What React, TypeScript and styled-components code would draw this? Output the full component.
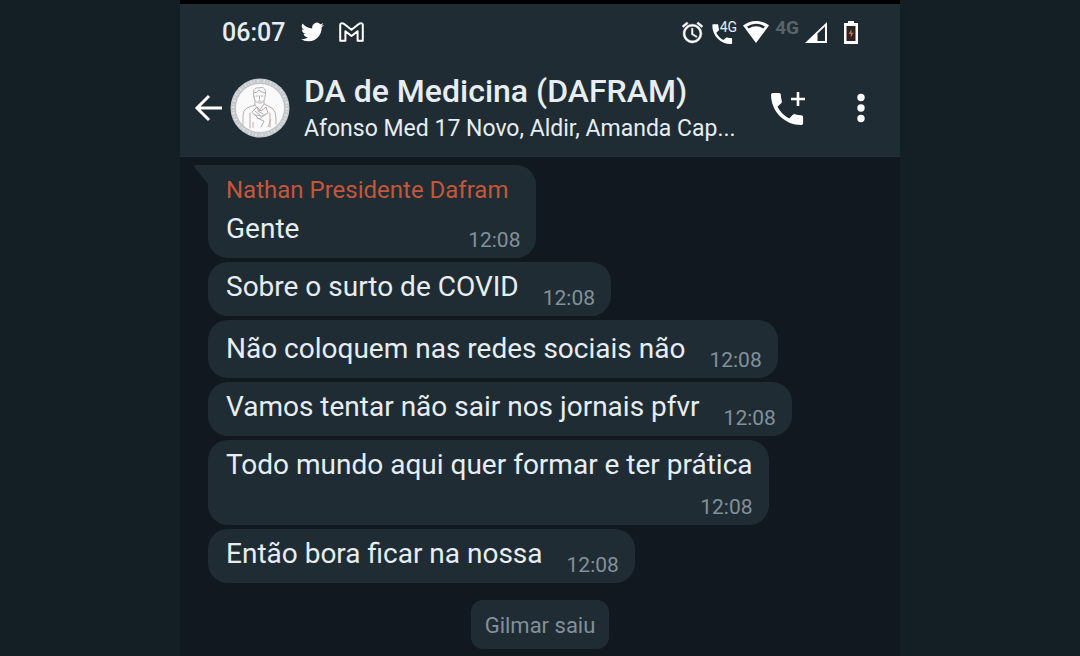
import React from "react";
import styled, { createGlobalStyle } from "styled-components";

const GlobalStyle = createGlobalStyle`
  *, *::before, *::after { box-sizing: border-box; }
  body {
    margin: 0;
    background: #131e25;
    color: #e6edf3;
    font-family: Roboto, "Liberation Sans", sans-serif;
  }
`;

const Phone = styled.div`
  width: 100%;
  max-width: 720px;
  min-height: 100vh;
  margin: 0 auto;
  display: flex;
  flex-direction: column;
  background: #111820;
  border-top: 4px solid #000;
`;

const TopBar = styled.header`
  background: #202c33;
  border-bottom: 1px solid #25303a;
`;

const StatusBar = styled.div`
  display: flex;
  align-items: center;
  height: 56px;
  padding: 0 42px;
`;

const Clock = styled.time`
  font-size: 25px;
  line-height: 32px;
  font-weight: 500;
  padding-top: 2px;
  margin-right: 16px;
`;

const StatusGroup = styled.div<{ $gap: number; $end?: boolean }>`
  display: flex;
  align-items: center;
  gap: ${(p) => p.$gap}px;
  margin-left: ${(p) => (p.$end ? "auto" : "0")};

  svg { display: block; }
`;

const CallStatus = styled.span`
  position: relative;
  display: block;
  width: 26px;
`;

const CallBadge = styled.span`
  position: absolute;
  top: 1px;
  right: 0;
  background: #202c33;
  font-size: 14px;
  line-height: 14px;
  height: 12px;
`;

const NetworkLabel = styled.span`
  color: #59636a;
  font-size: 19px;
  line-height: 20px;
  font-weight: 700;
  padding-bottom: 8px;
`;

const Battery = styled.div`
  margin-left: 17px;

  svg { display: block; }
`;

const Toolbar = styled.div`
  display: flex;
  align-items: center;
  height: 96px;
  padding: 0 20px 0 12px;
`;

const IconButton = styled.button<{ $width: number }>`
  display: flex;
  align-items: center;
  justify-content: center;
  flex: none;
  width: ${(p) => p.$width}px;
  height: 48px;
  padding: 0;
  border: 0;
  background: none;
  color: #fff;
  cursor: pointer;
`;

const Avatar = styled.svg`
  flex: none;
  width: 60px;
  height: 60px;
  margin-left: 6px;
`;

const GroupInfo = styled.div`
  flex: 1;
  min-width: 0;
  margin-left: 14px;
`;

const GroupName = styled.h1`
  margin: 0 0 2px;
  font-size: 32px;
  line-height: 40px;
  font-weight: 500;
  white-space: nowrap;
`;

const Members = styled.p`
  margin: 0;
  font-size: 23px;
  line-height: 32px;
  white-space: nowrap;
`;

const Actions = styled.div`
  display: flex;
  align-items: center;
  gap: 35px;
`;

const Chat = styled.main`
  flex: 1;
  display: flex;
  flex-direction: column;
  padding: 8px 28px;
`;

const Messages = styled.ol`
  display: flex;
  flex-direction: column;
  align-items: flex-start;
  gap: 4px;
  margin: 0;
  padding: 0;
  list-style: none;
`;

const Bubble = styled.li<{ $tail?: boolean; $roomy?: boolean }>`
  position: relative;
  max-width: 100%;
  padding: ${(p) => (p.$roomy ? 11 : 7)}px 16px 6px 18px;
  border-radius: ${(p) => (p.$tail ? "0 20px 20px 20px" : "20px")};
  background: #202c33;
`;

const Tail = styled.svg`
  position: absolute;
  top: 0;
  left: -14px;
`;

const Sender = styled.div`
  margin-bottom: 3px;
  padding-right: 12px;
  color: #c4573a;
  font-size: 24px;
  line-height: 36px;
`;

const Body = styled.div<{ $stacked?: boolean }>`
  display: flex;
  flex-direction: ${(p) => (p.$stacked ? "column" : "row")};
  align-items: flex-end;
  justify-content: space-between;
  column-gap: 24px;
  row-gap: 7px;
`;

const Message = styled.p`
  margin: 0 0 5px;
  font-size: 28px;
  line-height: 36px;
`;

const Sent = styled.time`
  color: #82909a;
  font-size: 21px;
  line-height: 24px;
`;

const Notice = styled.p`
  align-self: center;
  margin: 17px 0 0;
  padding: 10px 14px 7px;
  border-radius: 12px;
  background: #202c33;
  color: #82909a;
  font-size: 22px;
  line-height: 32px;
`;

type Item = {
  text: string;
  time: string;
  sender?: string;
  stacked?: boolean;
  roomy?: boolean;
};

const items: Item[] = [
  { sender: "Nathan Presidente Dafram", text: "Gente", time: "12:08" },
  { text: "Sobre o surto de COVID", time: "12:08" },
  { text: "Não coloquem nas redes sociais não", time: "12:08", roomy: true },
  { text: "Vamos tentar não sair nos jornais pfvr", time: "12:08" },
  { text: "Todo mundo aqui quer formar e ter prática", time: "12:08", stacked: true },
  { text: "Então bora ficar na nossa", time: "12:08" },
];

const PHONE =
  "M6.62 10.79c1.44 2.83 3.76 5.14 6.59 6.59l2.2-2.2c.27-.27.67-.36 1.02-.24 1.12.37 2.33.57 3.57.57.55 0 1 .45 1 1V20c0 .55-.45 1-1 1-9.39 0-17-7.61-17-17 0-.55.45-1 1-1h3.5c.55 0 1 .45 1 1 0 1.25.2 2.45.57 3.57.11.35.03.74-.25 1.02l-2.2 2.2z";

const TwitterIcon = () => (
  <svg width="23" height="24" viewBox="0 0 24 24" fill="#fff" aria-hidden="true">
    <path d="M23.95 4.57a10 10 0 0 1-2.82.77 4.96 4.96 0 0 0 2.16-2.72c-.95.55-2 .95-3.13 1.18a4.92 4.92 0 0 0-8.38 4.48C7.69 8.1 4.07 6.13 1.64 3.16a4.92 4.92 0 0 0 1.52 6.57 4.9 4.9 0 0 1-2.23-.61v.06a4.92 4.92 0 0 0 3.95 4.83 5 5 0 0 1-2.21.08 4.94 4.94 0 0 0 4.6 3.42A9.87 9.87 0 0 1 0 19.54a13.99 13.99 0 0 0 7.55 2.21c9.05 0 14-7.5 14-13.98 0-.21 0-.42-.02-.63a9.94 9.94 0 0 0 2.42-2.57z" />
  </svg>
);

const GmailIcon = () => (
  <svg width="25" height="20" viewBox="0 0 25 20" fill="none" stroke="#fff" strokeWidth="2" strokeLinejoin="round" aria-hidden="true">
    <path d="M1.2 3.2Q1.2 1 3.3 1.2Q4.3 1.2 5.2 2L12.5 7.8L19.8 2Q20.7 1.2 21.7 1.2Q23.8 1 23.8 3.2V18.8H18.6V9.2L12.5 14L6.4 9.2V18.8H1.2Z" />
  </svg>
);

const AlarmIcon = () => (
  <svg width="25" height="25" viewBox="0 0 24 24" fill="#fff" aria-hidden="true">
    <path d="M22 5.72l-4.6-3.86-1.29 1.53 4.6 3.86L22 5.72zM7.88 3.39L6.6 1.86 2 5.71l1.29 1.53 4.59-3.85zM12.5 8H11v6l4.75 2.85.75-1.23-4-2.37V8zM12 4c-4.97 0-9 4.03-9 9s4.02 9 9 9a9 9 0 0 0 0-18zm0 16c-3.87 0-7-3.13-7-7s3.13-7 7-7 7 3.13 7 7-3.13 7-7 7z" stroke="#fff" strokeWidth=".4" />
  </svg>
);

const WifiIcon = () => (
  <svg width="26" height="22" viewBox="0 0 26 22" aria-hidden="true">
    <path d="M13 0C8 0 3.600 1.700 0 4.600L13 22L26 4.600C22.400 1.700 18 0 13 0Z" fill="#fff" />
    <path d="M4 5.400Q13 .2 22 5.400L20.300 7.600Q13 3 5.700 7.600Z" fill="#202c33" />
  </svg>
);

const SignalIcon = () => (
  <svg width="22" height="21" viewBox="0 0 22 21" aria-hidden="true">
    <path d="M0 21L22 0V21Z" fill="#fff" />
    <path d="M12.500 11.500L20 4.500V19H12.500Z" fill="#202c33" />
  </svg>
);

const BatteryIcon = () => (
  <svg width="14" height="23" viewBox="0 0 14 23" aria-hidden="true">
    <path d="M4 0H10V2H14V23H0V2H4Z" fill="#fff" />
    <path d="M2.500 5H11.500V20H2.500Z" fill="#30221f" />
    <path d="M7.500 8L4.500 13H6.700V16.500L9.600 11.800H7.500Z" fill="#b8704f" />
  </svg>
);

const GroupAvatar = () => (
  <Avatar viewBox="0 0 60 60" role="img" aria-label="DAFRAM">
    <circle cx="30" cy="30" r="29.500" fill="#c3c7ca" />
    <circle cx="30" cy="30" r="27" fill="none" stroke="#dcdfe1" strokeWidth="3" strokeDasharray="2 1.500 1 2" />
    <circle cx="30" cy="30" r="24.500" fill="#fbfafa" stroke="#b5b9bc" strokeWidth=".7" />
    <g fill="none" stroke="#b3afb0" strokeWidth="1" strokeLinecap="round" strokeLinejoin="round">
      <path d="M24 19C22 12 25 9 29 10C34 8 37 12 35 18C35 22 33 25 30 25C26 25 24 22 24 19Z" />
      <path d="M24 15Q27 15 29 12Q32 15 35 15M26 18H28M31 18H33M29.500 18V21M28 23H31" />
      <path d="M25 23V27L17 30Q13 32 13 39V47M34 23V26L42 30Q46 33 46 40V46M20 35V50M40 35V49" />
      <path d="M25 27L29 33L34 26M22 34L27 29L31 33L36 29L38 35L32 38L25 37Z" />
      <path d="M24 36L29 41L35 37M28 33L33 36M27 40L34 43L31 49M25 33L30 37" />
    </g>
    <path d="M23 44V50M41 41L38 49" stroke="#d4aaa4" strokeWidth="1" />
  </Avatar>
);

export default function App() {
  return (
    <>
      <GlobalStyle />
      <Phone>
        <TopBar>
          <StatusBar>
            <Clock>06:07</Clock>
            <StatusGroup $gap={15}>
              <TwitterIcon />
              <GmailIcon />
            </StatusGroup>
            <StatusGroup $gap={6} $end>
              <AlarmIcon />
              <CallStatus>
                <svg width="26" height="26" viewBox="0 0 26 26" fill="#fff" aria-hidden="true">
                  <path d={PHONE} transform="translate(-2 2) scale(1.1)" />
                </svg>
                <CallBadge>4G</CallBadge>
              </CallStatus>
              <WifiIcon />
              <NetworkLabel>4G</NetworkLabel>
              <SignalIcon />
            </StatusGroup>
            <Battery>
              <BatteryIcon />
            </Battery>
          </StatusBar>
          <Toolbar>
            <IconButton $width={32} type="button" aria-label="Voltar">
              <svg width="30" height="28" viewBox="0 0 30 28" fill="none" stroke="currentColor" strokeWidth="3" aria-hidden="true">
                <path d="M29 14H4M16 2L4 14L16 26" />
              </svg>
            </IconButton>
            <GroupAvatar />
            <GroupInfo>
              <GroupName>DA de Medicina (DAFRAM)</GroupName>
              <Members>Afonso Med 17 Novo, Aldir, Amanda Cap...</Members>
            </GroupInfo>
            <Actions>
              <IconButton $width={36} type="button" aria-label="Chamada em grupo">
                <svg width="36" height="36" viewBox="0 0 36 36" fill="currentColor" aria-hidden="true">
                  <path d={PHONE} transform="translate(-5.300 -2.400) scale(1.780)" />
                  <path d="M25.700 2H28.300V7.700H34V10.300H28.300V16H25.700V10.300H20V7.700H25.700Z" />
                </svg>
              </IconButton>
              <IconButton $width={38} type="button" aria-label="Mais opções">
                <svg width="8" height="30" viewBox="0 0 8 30" fill="currentColor" aria-hidden="true">
                  <circle cx="4" cy="4.500" r="3.700" />
                  <circle cx="4" cy="15" r="3.700" />
                  <circle cx="4" cy="25.500" r="3.700" />
                </svg>
              </IconButton>
            </Actions>
          </Toolbar>
        </TopBar>
        <Chat>
          <Messages>
            {items.map((item) => (
              <Bubble key={item.text} $tail={!!item.sender} $roomy={item.roomy}>
                {item.sender && (
                  <>
                    <Tail width="15" height="20" viewBox="0 0 15 20" aria-hidden="true">
                      <path d="M2 0H15V20L1 3Q-1 0 2 0Z" fill="#202c33" />
                    </Tail>
                    <Sender>{item.sender}</Sender>
                  </>
                )}
                <Body $stacked={item.stacked}>
                  <Message>{item.text}</Message>
                  <Sent>{item.time}</Sent>
                </Body>
              </Bubble>
            ))}
          </Messages>
          <Notice>Gilmar saiu</Notice>
        </Chat>
      </Phone>
    </>
  );
}
